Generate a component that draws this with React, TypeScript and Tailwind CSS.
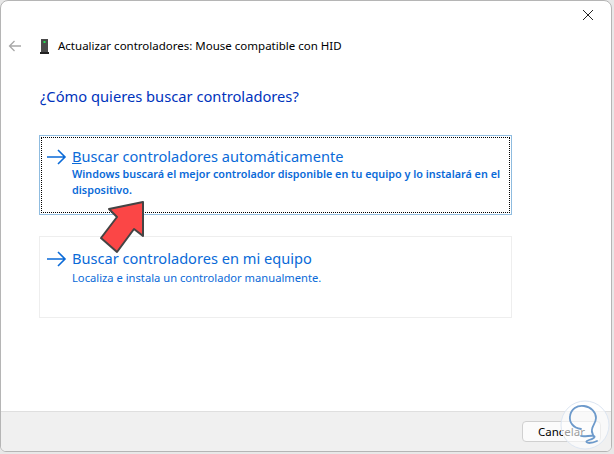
const font = "[font-family:'Noto_Sans',sans-serif]";

function ArrowIcon() {
  return (
    <svg width="20" height="16" viewBox="0 0 20 16" className="shrink-0 mt-[3px]" fill="none" stroke="#0a6ad8" strokeWidth="1.6">
      <path d="M0 8h18M11 1l7 7-7 7" />
    </svg>
  );
}

export default function App() {
  return (
    <div className={`relative w-[614px] h-[454px] bg-[#e8e8e8] overflow-hidden ${font}`}>
      <div className="relative w-[612px] h-[452px] flex flex-col bg-white border border-[#b5b5b5] rounded-t-lg rounded-b-md overflow-hidden">
        {/* title bar */}
        <div className="h-[36px] flex justify-end items-start shrink-0">
          <svg width="12" height="12" viewBox="0 0 12 12" className="mt-[8px] mr-[17px]" stroke="#222" strokeWidth="1" fill="none">
            <path d="M1 1l10 10M11 1L1 11" />
          </svg>
        </div>

        <div className="flex items-center h-[18px] pl-[7px] shrink-0">
          <svg width="14" height="14" viewBox="0 0 14 14" fill="none" stroke="#a8a8a8" strokeWidth="1.3">
            <path d="M13 7H1.5M6.5 2l-5 5 5 5" />
          </svg>
          <svg width="9" height="15" viewBox="0 0 9 15" className="ml-[18px]">
            <rect x="1" y="0" width="7" height="13" fill="#4a4a4a" />
            <rect x="0" y="13" width="9" height="2" fill="#222" />
            <rect x="3.5" y="2" width="2" height="2" fill="#22e050" />
          </svg>
          <span className="ml-[9px] text-[11.5px] leading-none text-black">Actualizar controladores: Mouse compatible con HID</span>
        </div>

        <h1 className="ml-[39px] mt-[31px] text-[14.7px] leading-5 font-normal text-[#0033bc]">¿Cómo quieres buscar controladores?</h1>

        <div className="ml-[38px] w-[473px] mt-[29px] h-[80px] border border-[#8fbce0] p-[1px] shrink-0">
          <div className="h-full border border-dotted border-black flex pl-[5px] pt-[8px] gap-[5px]">
            <ArrowIcon />
            <div>
              <div className="text-[14.6px] leading-5 text-[#0a6ad8]"><span className="underline">B</span>uscar controladores automáticamente</div>
              <p className="text-[10.8px] leading-4 font-semibold text-[#0a6ad8] w-[440px]">Windows buscará el mejor controlador disponible en tu equipo y lo instalará en el dispositivo.</p>
            </div>
          </div>
        </div>

        <div className="ml-[38px] w-[473px] mt-[21px] h-[82px] border border-[#eeeeee] flex pl-[7px] pt-[11px] gap-[5px] shrink-0">
          <ArrowIcon />
          <div>
            <div className="text-[14.6px] leading-5 text-[#0a6ad8]">Buscar controladores en mi equipo</div>
            <p className="text-[11.2px] leading-4 mt-[2px] text-[#0a6ad8]">Localiza e instala un controlador manualmente.</p>
          </div>
        </div>

        {/* footer */}
        <div className="mt-auto h-[40px] bg-[#f0f0f0] border-t border-[#dfdfdf] flex justify-end items-start pt-[9px] pr-[10px] shrink-0">
          <button className="w-[79px] h-[21px] bg-[#fbfbfb] border border-[#d0d0d0] rounded text-[11.5px] leading-none text-black">Cancelar</button>
        </div>
      </div>

      {/* red annotation arrow */}
      <svg width="50" height="56" viewBox="0 0 50 56" className="absolute left-[98px] top-[198px]">
        <path d="M45 4 L45 38 L36 31 L19 54 L3 40 L19 19 L11 11 Z" fill="#fb4646" stroke="#444" strokeWidth="2" strokeLinejoin="round" />
      </svg>

      {/* watermark */}
      <svg width="50" height="50" viewBox="0 0 50 50" className="absolute left-[560px] top-[400px]" fill="none">
        <circle cx="25" cy="25" r="24" fill="#ffffff" fillOpacity="0.6" stroke="#dde6f2" />
        <path d="M21 29C13 28 9 22 10 16 11 9 17 5 24 6c7 1 12 6 12 12 0 4-3 7-4 11-1 3 1 5 2 8M21 36c4 1 10-1 13 0 2 1-1 3-5 4-3 1-4 2 0 3 3 0 6-1 8-2" stroke="#6d9acb" strokeWidth="1.8" strokeLinecap="round" />
      </svg>
    </div>
  );
}
